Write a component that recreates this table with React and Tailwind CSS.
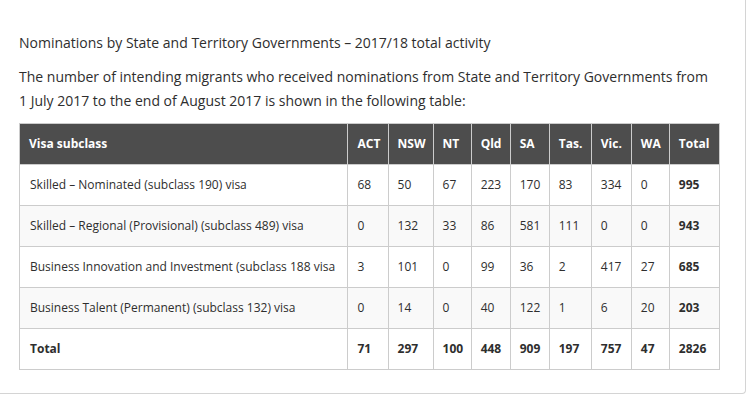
const rows = [
  ["Skilled – Nominated (subclass 190) visa", 68, 50, 67, 223, 170, 83, 334, 0, 995],
  ["Skilled – Regional (Provisional) (subclass 489) visa", 0, 132, 33, 86, 581, 111, 0, 0, 943],
  ["Business Innovation and Investment (subclass 188 visa", 3, 101, 0, 99, 36, 2, 417, 27, 685],
  ["Business Talent (Permanent) (subclass 132) visa", 0, 14, 0, 40, 122, 1, 6, 20, 203],
];

const totals = ["Total", 71, 297, 100, 448, 909, 197, 757, 47, 2826];
const heads = ["Visa subclass", "ACT", "NSW", "NT", "Qld", "SA", "Tas.", "Vic.", "WA", "Total"];
const widths = ["w-[328px]", "w-[40px]", "w-[45px]", "w-[38px]", "w-[39px]", "w-[39px]", "w-[42px]", "w-[40px]", "w-[38px]", "w-[50px]"];

export default function App() {
  return (
    <div className="bg-white w-[747px] h-[400px] overflow-hidden font-['Open_Sans',sans-serif] text-[#2e2e2e]">
      <div className="w-[746px] h-[394px] border-r border-b border-[#d4d4d4] rounded-br-[4px] pl-[19px] pt-[31px]">
        <p className="text-[14px] leading-[24px]">
          Nominations by State and Territory Governments – 2017/18 total activity
        </p>
        <p className="mt-[10px] text-[14px] leading-[24px] w-[700px]">
          The number of intending migrants who received nominations from State and Territory Governments from 1 July 2017 to the end of August 2017 is shown in the following table:
        </p>
        <table className="mt-[10px] w-[701px] table-fixed border-collapse border border-[#ccc] text-[12px]">
          <colgroup>
            {widths.map((w, i) => (
              <col key={i} className={w} />
            ))}
          </colgroup>
          <thead>
            <tr className="bg-[#4d4d4d] text-white h-[41px]">
              {heads.map((h) => (
                <th key={h} className="border border-[#ccc] px-[9px] text-left font-bold whitespace-nowrap">
                  {h}
                </th>
              ))}
            </tr>
          </thead>
          <tbody>
            {rows.map((r, i) => (
              <tr key={i} className={`h-[41px] ${i % 2 === 1 ? "bg-[#f9f9f9]" : "bg-white"}`}>
                {r.map((c, j) => (
                  <td
                    key={j}
                    className={`border border-[#ccc] whitespace-nowrap ${j === 0 ? "pl-[10px]" : "pl-[9px]"} ${j === 9 ? "font-bold" : ""}`}
                  >
                    {c}
                  </td>
                ))}
              </tr>
            ))}
            <tr className="h-[41px] bg-white font-bold">
              {totals.map((c, j) => (
                <td key={j} className={`border border-[#ccc] whitespace-nowrap ${j === 0 ? "pl-[10px]" : "pl-[9px]"}`}>
                  {c}
                </td>
              ))}
            </tr>
          </tbody>
        </table>
      </div>
    </div>
  );
}
